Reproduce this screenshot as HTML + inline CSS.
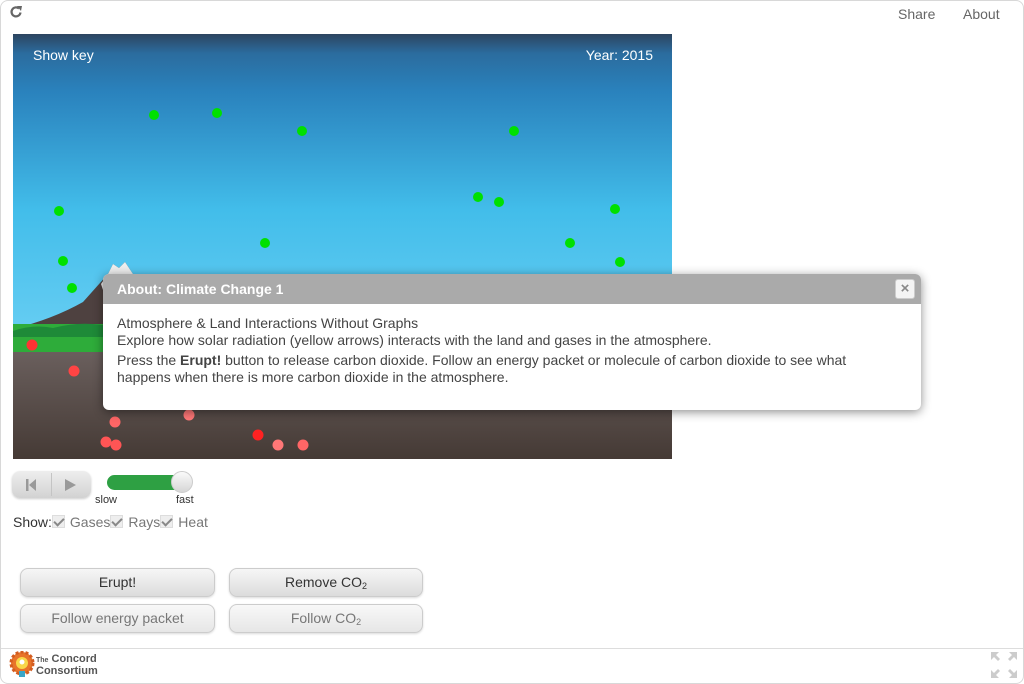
<!DOCTYPE html>
<html><head><meta charset="utf-8">
<style>
*{box-sizing:border-box;margin:0;padding:0}
body{width:1024px;height:684px;overflow:hidden;background:#fff;font-family:"Liberation Sans",Arial,sans-serif;position:relative}
.frame{position:absolute;left:0;top:0;width:1024px;height:684px;border:1px solid #d8d8d8;border-radius:8px}
.top a{position:absolute;top:6px;font-size:14px;color:#666}
.sim{position:absolute;left:13px;top:34px;width:659px;height:425px}
.dlg{position:absolute;left:103px;top:274px;width:818px;height:136px;background:#fff;border-radius:6px;box-shadow:0 2px 10px rgba(0,0,0,.45);overflow:hidden}
.dlg .hd{height:30px;background:#aaa;color:#fff;font-weight:bold;font-size:14px;padding:7px 14px}
.dlg .x{position:absolute;right:6px;top:5px;width:20px;height:20px;background:#f4f4f4;border:1px solid #ccc;border-radius:3px;color:#888;font-size:15px;font-weight:bold;text-align:center;line-height:18px}
.dlg .bd{padding:11px 55px 11px 14px;font-size:14px;color:#444;line-height:17px}
.btn{position:absolute;height:29px;border:1px solid #ccc;border-radius:8px;background:linear-gradient(#f6f6f6,#dcdcdc);text-align:center;font-size:14px;line-height:27px;color:#333;box-shadow:0 1px 2px rgba(0,0,0,.15)}
.btn.dis{color:#777;background:linear-gradient(#f8f8f8,#e6e6e6)}
sub{font-size:9px;vertical-align:-2px}
.cb{display:inline-block;width:13px;height:13px;background:#eee;border:1px solid #ddd;vertical-align:-1px;position:relative;margin-right:5px}
.cb:after{content:"";position:absolute;left:3px;top:0px;width:4px;height:8px;border:solid #888;border-width:0 2px 2px 0;transform:rotate(45deg)}
</style></head><body>
<div class="frame"></div>
<svg style="position:absolute;left:9px;top:5px" width="14" height="14" viewBox="0 0 14 14"><path d="M11.5 7.5A4.5 4.5 0 1 1 10 3.5" fill="none" stroke="#666" stroke-width="2.2"/><path d="M8 1l5 0-1 5z" fill="#666"/></svg>
<div class="top"><a style="left:898px">Share</a><a style="left:963px">About</a></div>

<svg class="sim" viewBox="0 0 659 425">
<defs>
<linearGradient id="sky" x1="0" y1="0" x2="0" y2="1"><stop offset="0" stop-color="#2d4560"/><stop offset=".06" stop-color="#2b6c9e"/><stop offset=".18" stop-color="#2a82bd"/><stop offset=".55" stop-color="#42bdea"/><stop offset="1" stop-color="#6cd0f4"/></linearGradient>
<linearGradient id="dirt" x1="0" y1="0" x2="0" y2="1"><stop offset="0" stop-color="#6a5f5d"/><stop offset="1" stop-color="#453a35"/></linearGradient>
</defs>
<rect width="659" height="320" fill="url(#sky)"/>
<path d="M0 295 Q40 285 70 268 L95 240 L100 230 L106 234 L112 228 L120 240 Q150 265 200 285 L260 300 L0 300Z" fill="#4e4140"/>
<path d="M95 240 L100 230 L106 234 L112 228 L120 240 L125 250 L118 258 L112 252 L106 265 L100 255 L92 262 L88 250Z" fill="#eee"/>
<rect y="290" width="659" height="30" fill="#2eac3a"/>
<path d="M0 297 Q20 290 40 294 Q70 286 100 293 Q140 286 180 293 Q220 286 260 294 L260 303 L0 303Z" fill="#1e8a38"/>
<rect y="318" width="659" height="107" fill="url(#dirt)"/>
<g fill="#00e000">
<circle cx="141" cy="81" r="5"/><circle cx="204" cy="79" r="5"/><circle cx="289" cy="97" r="5"/><circle cx="501" cy="97" r="5"/>
<circle cx="46" cy="177" r="5"/><circle cx="465" cy="163" r="5"/><circle cx="486" cy="168" r="5"/><circle cx="602" cy="175" r="5"/>
<circle cx="252" cy="209" r="5"/><circle cx="557" cy="209" r="5"/><circle cx="50" cy="227" r="5"/><circle cx="607" cy="228" r="5"/><circle cx="59" cy="254" r="5"/>
</g>
<g>
<circle cx="19" cy="311" r="5.5" fill="#f33"/><circle cx="61" cy="337" r="5.5" fill="#f44"/>
<circle cx="102" cy="388" r="5.5" fill="#f66"/><circle cx="176" cy="381" r="5.5" fill="#f77"/>
<circle cx="93" cy="408" r="5.5" fill="#f55"/><circle cx="103" cy="411" r="5.5" fill="#f55"/>
<circle cx="245" cy="401" r="5.5" fill="#f22"/><circle cx="265" cy="411" r="5.5" fill="#f77"/><circle cx="290" cy="411" r="5.5" fill="#f66"/>
</g>
<text x="20" y="26" fill="#fff" font-size="14" font-family="Liberation Sans">Show key</text>
<text x="640" y="26" fill="#fff" font-size="14" text-anchor="end" font-family="Liberation Sans">Year: 2015</text>
</svg>

<div class="dlg"><div class="hd">About: Climate Change 1</div><div class="x">×</div>
<div class="bd">Atmosphere &amp; Land Interactions Without Graphs<br>Explore how solar radiation (yellow arrows) interacts with the land and gases in the atmosphere.<div style="margin-top:3px">Press the <b>Erupt!</b> button to release carbon dioxide. Follow an energy packet or molecule of carbon dioxide to see what happens when there is more carbon dioxide in the atmosphere.</div></div></div>

<div style="position:absolute;left:12px;top:471px;width:79px;height:27px;border-radius:8px;background:linear-gradient(#eee,#d2d2d2);box-shadow:0 1px 2px rgba(0,0,0,.2)">
<div style="position:absolute;left:39px;top:2px;width:1px;height:23px;background:#c4c4c4"></div>
<svg style="position:absolute;left:14px;top:8px" width="12" height="12"><rect x="0" y="0" width="2.5" height="12" fill="#999"/><path d="M10 0L3 6 10 12Z" fill="#999"/></svg>
<svg style="position:absolute;left:53px;top:8px" width="12" height="12"><path d="M0 0L11 6 0 12Z" fill="#999"/></svg></div>
<div style="position:absolute;left:107px;top:475px;width:76px;height:15px;border-radius:8px;background:#2ea043"></div>
<div style="position:absolute;left:171px;top:471px;width:22px;height:22px;border-radius:50%;background:linear-gradient(#fafafa,#d6d6d6);border:1px solid #ccc"></div>
<div style="position:absolute;left:95px;top:494px;font-size:11px;color:#333">slow</div>
<div style="position:absolute;left:176px;top:494px;font-size:11px;color:#333">fast</div>
<div style="position:absolute;left:13px;top:514px;font-size:14px;color:#333">Show:<span class="cb"></span><span style="color:#777">Gases</span><span class="cb"></span><span style="color:#777">Rays</span><span class="cb"></span><span style="color:#777">Heat</span></div>

<div class="btn" style="left:20px;top:568px;width:195px">Erupt!</div>
<div class="btn" style="left:229px;top:568px;width:194px">Remove CO<sub>2</sub></div>
<div class="btn dis" style="left:20px;top:604px;width:195px">Follow energy packet</div>
<div class="btn dis" style="left:229px;top:604px;width:194px">Follow CO<sub>2</sub></div>

<div style="position:absolute;left:1px;top:648px;width:1022px;height:1px;background:#ddd"></div>
<svg style="position:absolute;left:9px;top:651px" width="26" height="28" viewBox="0 0 26 28"><circle cx="13" cy="12" r="11" fill="#e8742a" stroke="#d35c20" stroke-dasharray="3 2" stroke-width="3"/><circle cx="13" cy="12" r="6" fill="#f8d84a"/><circle cx="13" cy="11" r="2.5" fill="#fff"/><rect x="10" y="20" width="6" height="6" fill="#3aa6c8"/></svg>
<div style="position:absolute;left:36px;top:654px;font-size:11px;line-height:10px;color:#555;font-weight:bold"><span style="font-size:7px">The</span> Concord<br>Consortium</div>
<svg style="position:absolute;left:991px;top:652px" width="26" height="26" viewBox="0 0 26 26" fill="#ccc"><path d="M0 0h8l-3 3 4 4-2 2-4-4-3 3z"/><path d="M26 0h-8l3 3-4 4 2 2 4-4 3 3z"/><path d="M0 26h8l-3-3 4-4-2-2-4 4-3-3z"/><path d="M26 26h-8l3-3-4-4 2-2 4 4 3-3z"/></svg>
</body></html>
